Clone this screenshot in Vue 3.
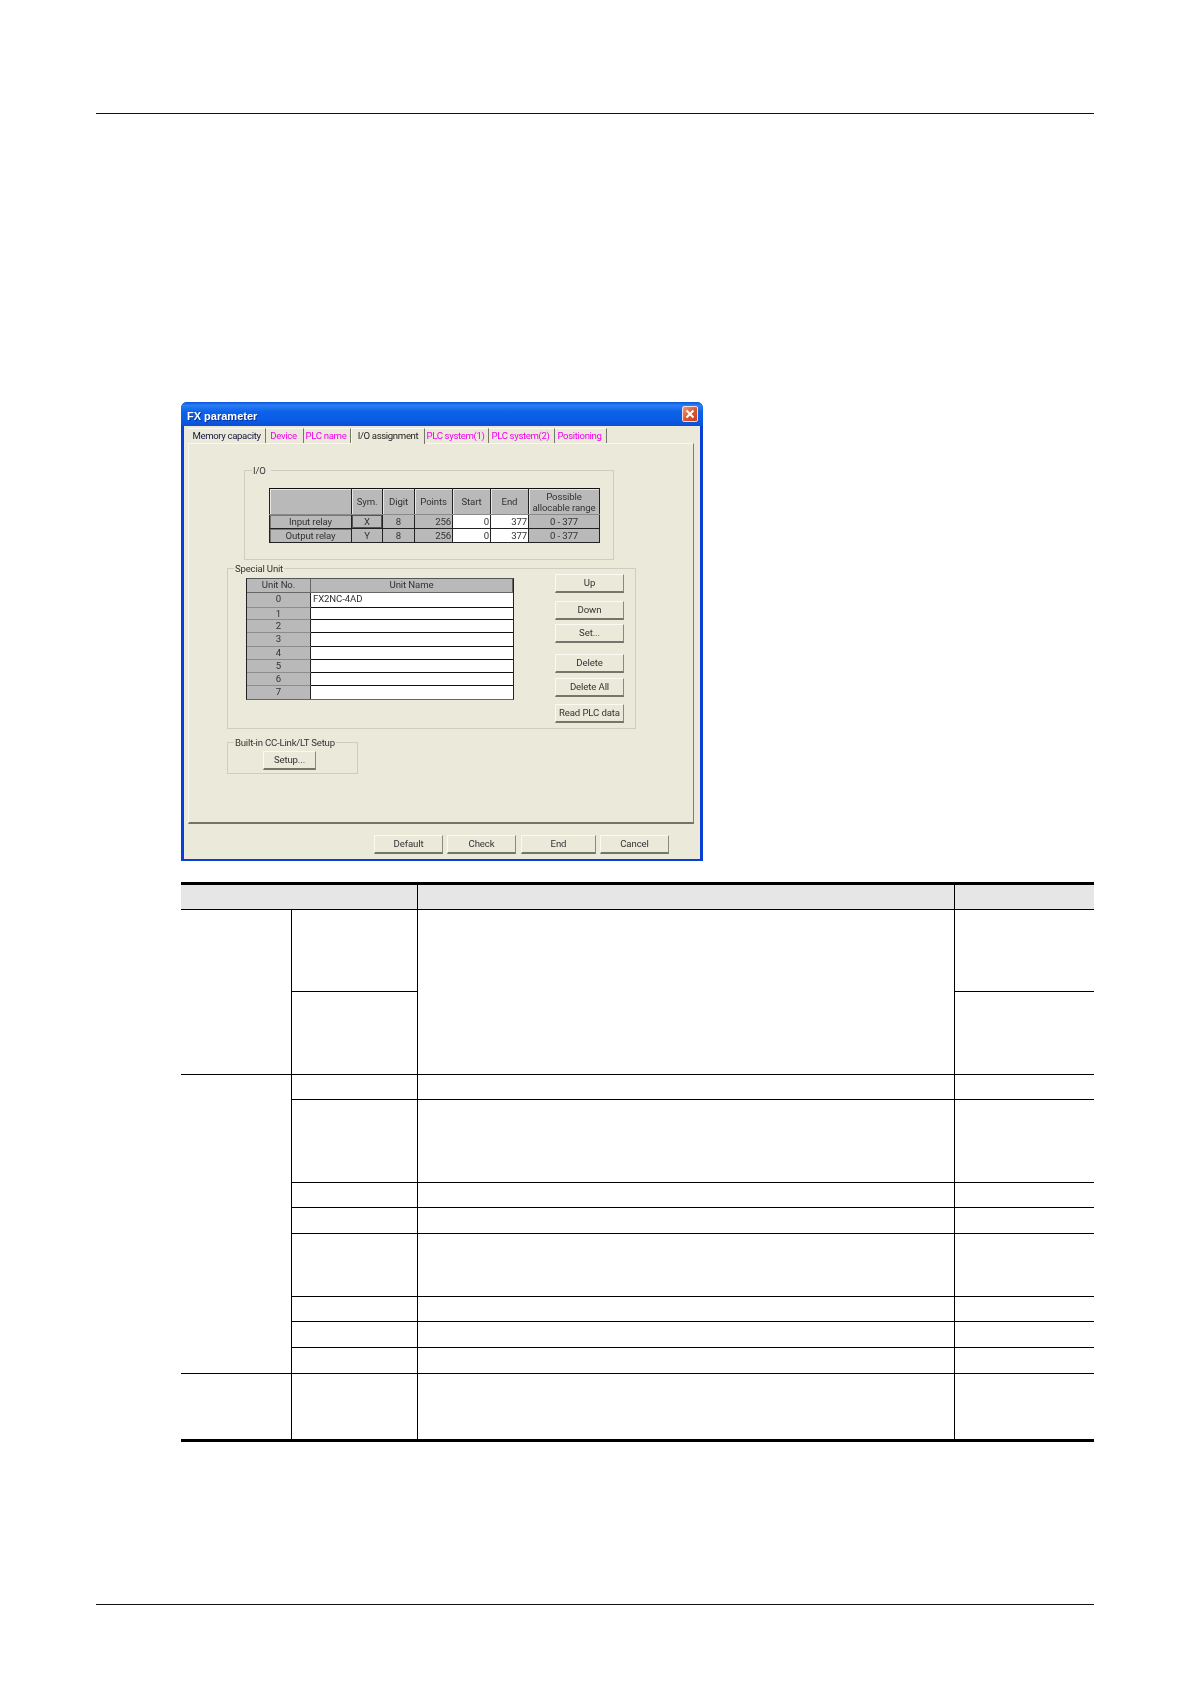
<script setup>
const tabs = [
  { label: 'Memory capacity', width: 78, kind: 'navy' },
  { label: 'Device', width: 38, kind: 'pink' },
  { label: 'PLC name', width: 47, kind: 'pink' },
  { label: 'I/O assignment', width: 74, kind: 'active' },
  { label: 'PLC system(1)', width: 64, kind: 'pink' },
  { label: 'PLC system(2)', width: 66, kind: 'pink' },
  { label: 'Positioning', width: 52, kind: 'pink' }
]
const ioRows = [
  { name: 'Input relay', sym: 'X', cls: 'sel' },
  { name: 'Output relay', sym: 'Y', cls: '' }
]
const units = [
  { no: '0', name: 'FX2NC-4AD' },
  { no: '1', name: '' },
  { no: '2', name: '' },
  { no: '3', name: '' },
  { no: '4', name: '' },
  { no: '5', name: '' },
  { no: '6', name: '' },
  { no: '7', name: '' }
]
const sideButtons = ['Up', 'Down', 'Set...', 'Delete', 'Delete All', 'Read PLC data']
const footButtons = [
  { label: 'Default', cls: '' },
  { label: 'Check', cls: '' },
  { label: 'End', cls: 'wide' },
  { label: 'Cancel', cls: '' }
]
</script>

<template>
  <div class="page">
    <div class="rule"></div>

    <div class="dialog">
      <div class="title">
        <span class="title-text">FX parameter</span>
        <span class="close">
          <svg viewBox="0 0 16 16" width="16" height="16">
            <path d="M4.5 4.5 L11.5 11.5 M11.5 4.5 L4.5 11.5" stroke="#fff" stroke-width="2" fill="none" />
          </svg>
        </span>
      </div>
      <div class="body">
        <div class="tabs">
          <div
            v-for="t in tabs"
            :key="t.label"
            class="tab"
            :class="t.kind"
            :style="{ width: t.width + 'px' }"
          >{{ t.label }}</div>
        </div>

        <div class="panel">
          <div class="group io-group">
            <span class="legend">I/O</span>
            <table class="io-table">
              <colgroup>
                <col class="c1" /><col class="c2" /><col class="c3" /><col class="c4" />
                <col class="c5" /><col class="c6" /><col class="c7" />
              </colgroup>
              <tr class="io-head">
                <th></th><th>Sym.</th><th>Digit</th><th>Points</th><th>Start</th><th>End</th>
                <th>Possible<br />allocable range</th>
              </tr>
              <tr v-for="r in ioRows" :key="r.sym" class="io-row">
                <td class="io-name">{{ r.name }}</td>
                <td :class="r.cls">{{ r.sym }}</td>
                <td>8</td>
                <td class="num">256</td>
                <td class="num white">0</td>
                <td class="num white">377</td>
                <td>0 - 377</td>
              </tr>
            </table>
          </div>

          <div class="group unit-group">
            <span class="legend">Special Unit</span>
            <div class="unit-table">
              <div class="u-head">Unit No.</div>
              <div class="u-head">Unit Name</div>
              <template v-for="u in units" :key="u.no">
                <div class="u-no">{{ u.no }}</div>
                <div class="u-name">{{ u.name }}</div>
              </template>
            </div>
            <div class="side-buttons">
              <div v-for="b in sideButtons" :key="b" class="btn">{{ b }}</div>
            </div>
          </div>

          <div class="group link-group">
            <span class="legend">Built-in CC-Link/LT Setup</span>
            <div class="btn setup">Setup...</div>
          </div>
        </div>

        <div class="foot">
          <div v-for="b in footButtons" :key="b.label" class="btn" :class="b.cls">{{ b.label }}</div>
        </div>
      </div>
    </div>

    <div class="grid-table">
      <div class="g head h1"></div>
      <div class="g head h2"></div>
      <div class="g head h3"></div>

      <div class="g c-a r1"></div>
      <div class="g c-b r2a"></div>
      <div class="g c-c r1"></div>
      <div class="g c-d r2a"></div>
      <div class="g c-b r2b"></div>
      <div class="g c-d r2b"></div>

      <div class="g c-a r8"></div>
      <template v-for="n in 8" :key="n">
        <div class="g c-b"></div>
        <div class="g c-c"></div>
        <div class="g c-d"></div>
      </template>

      <div class="g c-a"></div>
      <div class="g c-b"></div>
      <div class="g c-c"></div>
      <div class="g c-d"></div>
    </div>

    <div class="rule foot-rule"></div>
  </div>
</template>

<style scoped>
.page {
  width: 1190px;
  height: 1684px;
  padding-top: 113px;
  box-sizing: border-box;
  background: #fff;
  overflow: hidden;
  font-family: Roboto, "Liberation Sans", sans-serif;
}
.rule {
  margin-left: 96px;
  width: 998px;
  height: 1px;
  background: #111;
}
.foot-rule {
  margin-top: 162px;
}

/* dialog */
.dialog {
  margin: 288px 0 0 181px;
  width: 522px;
  height: 459px;
  box-sizing: border-box;
  display: flex;
  flex-direction: column;
  background: #0a3fd6;
  border-radius: 6px 6px 0 0;
  font-size: 9.6px;
  letter-spacing: -0.12px;
  color: #333;
  filter: blur(0.3px);
}
.title {
  height: 24px;
  flex: none;
  display: flex;
  align-items: center;
  justify-content: space-between;
  padding: 0 5px 0 6px;
  border-radius: 6px 6px 0 0;
  background: linear-gradient(#0a55dc 0%, #2a7df2 14%, #0d62e8 40%, #0a5ce4 75%, #0a4fd6 100%);
}
.title-text {
  padding-top: 3px;
  font-family: "Liberation Sans", sans-serif;
  font-weight: 700;
  font-size: 11px;
  letter-spacing: 0;
  color: #fff;
  text-shadow: 1px 1px 0 #0a2f9c;
}
.close {
  width: 16px;
  height: 16px;
  display: block;
  border: 1px solid #f4dcd2;
  border-radius: 2px;
  box-sizing: border-box;
  background: linear-gradient(135deg, #ec9a7c, #d9562f 55%, #c8401f);
}
.close svg {
  display: block;
  margin: -1px;
}
.body {
  flex: 1;
  margin: 0 3px 2px;
  padding: 2px 6px 0 4px;
  background: #ebe9da;
  display: flex;
  flex-direction: column;
}
.tabs {
  display: flex;
  height: 15px;
  flex: none;
  position: relative;
  z-index: 1;
  letter-spacing: -0.35px;
}
.tab {
  flex: none;
  box-sizing: border-box;
  height: 15px;
  line-height: 14px;
  text-align: center;
  white-space: nowrap;
  border-right: 1px solid #77756a;
  border-top: 1px solid #fbfaf3;
}
.tab.navy {
  color: #14143c;
}
.tab.pink {
  color: #f300f0;
  padding-right: 2px;
}
.tab.active {
  color: #222;
  height: 16px;
  background: #ebe9da;
  border-left: 1px solid #fbfaf3;
  border-top: 1px solid #fff;
}
.panel {
  height: 381px;
  flex: none;
  box-sizing: border-box;
  border-top: 1px solid #f8f7ef;
  border-left: 1px solid #f8f7ef;
  border-right: 1px solid #7f7d70;
  border-bottom: 2px solid #74726a;
  padding-top: 26px;
  display: flex;
  flex-direction: column;
  align-items: flex-start;
}
.group {
  position: relative;
  box-sizing: border-box;
  border: 1px solid #cfcebe;
}
.legend {
  position: absolute;
  top: -7px;
  left: 6px;
  line-height: 13px;
  padding: 0 1px;
  background: #ebe9da;
  white-space: nowrap;
  letter-spacing: -0.2px;
}
.io-group {
  margin-left: 55px;
  width: 370px;
  height: 90px;
  padding: 17px 0 0 24px;
}
.io-group .legend {
  left: 7px;
  padding: 0 5px 0 1px;
}
.io-table {
  border-collapse: collapse;
  table-layout: fixed;
  width: 330px;
  background: #b9b9b9;
  border: 1px solid #111;
  text-align: center;
}
.c1 { width: 82px; }
.c2 { width: 31px; }
.c3 { width: 32px; }
.c4, .c5, .c6 { width: 38px; }
.c7 { width: 71px; }
.io-table th,
.io-table td {
  padding: 0;
  font-weight: 400;
  border: 1px solid #222;
  line-height: 11px;
  overflow: hidden;
  white-space: nowrap;
}
.io-head th {
  height: 25px;
  border-top-color: #111;
  border-bottom-color: #8a8a8a;
  box-shadow: inset 1px 1px 0 #e6e6e6;
}
.io-row td {
  height: 13px;
}
.io-name {
  box-shadow: inset 0 1px 0 #777, inset 1px 0 0 #777;
}
.io-table td.sel {
  box-shadow: inset 0 0 0 1px #555;
}
.io-table td.num {
  text-align: right;
  padding-right: 1px;
}
.io-table td.white {
  background: #fff;
}

.unit-group {
  margin: 8px 0 0 38px;
  width: 409px;
  height: 161px;
  padding: 5px 0 0 18px;
  display: flex;
  align-items: flex-start;
}
.unit-table {
  margin-top: 4px;
  width: 268px;
  display: grid;
  grid-template-columns: 64px 202px;
  grid-template-rows: 14px 15px 12px 13px 14px 13px 13px 13px 13px;
  box-sizing: border-box;
  border: 1px solid #222;
  border-top-color: #555;
  border-bottom-color: #666;
  text-align: center;
}
.u-head,
.u-no,
.u-name {
  box-sizing: border-box;
  line-height: 12px;
  border-bottom: 1px solid #111;
  white-space: nowrap;
  overflow: hidden;
}
.u-head {
  background: #b9b9b9;
  border-bottom-color: #666;
  border-right: 1px solid #666;
}
.u-no {
  background: #b9b9b9;
  border-bottom-color: #8c8c8c;
  border-right: 1px solid #222;
}
.u-name {
  background: #fff;
  text-align: left;
  padding-left: 2px;
}
.unit-table > :nth-last-child(-n + 2) {
  border-bottom: 0;
}
.side-buttons {
  margin-left: 41px;
  width: 69px;
  display: flex;
  flex-direction: column;
}
.btn {
  box-sizing: border-box;
  flex: none;
  height: 19px;
  line-height: 16px;
  text-align: center;
  white-space: nowrap;
  background: #ebe9da;
  border-top: 1px solid #fbfaf2;
  border-left: 1px solid #fbfaf2;
  border-right: 1px solid #8b897c;
  border-bottom: 2px solid #77756a;
}
.side-buttons .btn:nth-child(2) { margin-top: 8px; }
.side-buttons .btn:nth-child(3) { margin-top: 4px; }
.side-buttons .btn:nth-child(4) { margin-top: 11px; }
.side-buttons .btn:nth-child(5) { margin-top: 5px; }
.side-buttons .btn:nth-child(6) { margin-top: 7px; }

.link-group {
  margin: 13px 0 0 38px;
  width: 131px;
  height: 32px;
  padding: 8px 0 0 35px;
}
.setup {
  width: 53px;
}
.foot {
  margin: 11px 0 0 186px;
  display: flex;
  gap: 4px;
}
.foot .btn {
  width: 69px;
}
.foot .btn.wide {
  width: 75px;
  margin-left: 1px;
}

/* spec table */
.grid-table {
  margin: 21px 0 0 181px;
  width: 913px;
  box-sizing: border-box;
  border-top: 3px solid #000;
  border-bottom: 3px solid #000;
  display: grid;
  grid-template-columns: 110px 126px 537px 140px;
  grid-template-rows: 24px 82px 83px 25px 83px 25px 26px 63px 25px 26px 26px 66px;
  height: 560px;
}
.g {
  box-sizing: border-box;
  border-top: 1px solid #000;
  border-left: 1px solid #000;
}
.head {
  background: #e6e6e6;
  border-top: 0;
}
.h1 {
  grid-column: 1 / span 2;
  border-left: 0;
}
.c-a {
  grid-column: 1;
  border-left: 0;
}
.c-b { grid-column: 2; }
.c-c { grid-column: 3; }
.c-d { grid-column: 4; }
.r1 { grid-row: 2 / span 2; }
.r2a { grid-row: 2; }
.r2b { grid-row: 3; }
.r8 { grid-row: 4 / span 8; }
</style>
